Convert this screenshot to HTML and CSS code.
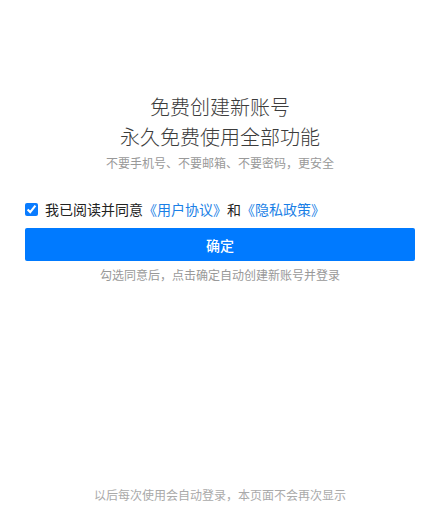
FILE: index.html
```html
<!DOCTYPE html>
<html lang="zh-CN">
<head>
<meta charset="utf-8">
<title>创建新账号</title>
<link rel="stylesheet" href="styles.css">
</head>
<body>
<div class="page">
  <div class="title">
    <div>免费创建新账号</div>
    <div>永久免费使用全部功能</div>
  </div>
  <div class="subtitle">不要手机号、不要邮箱、不要密码，更安全</div>
  <label class="agree">
    <input type="checkbox" class="check" checked>
    <span>我已阅读并同意<a class="link">《用户协议》</a>和<a class="link">《隐私政策》</a></span>
  </label>
  <button class="confirm">确定</button>
  <div class="hint">勾选同意后，点击确定自动创建新账号并登录</div>
  <div class="footer">以后每次使用会自动登录，本页面不会再次显示</div>
</div>
</body>
</html>
```

FILE: styles.css
```css
html, body {
  margin: 0;
  padding: 0;
  background: #ffffff;
}
body {
  font-family: "Noto Sans CJK SC", "Noto Sans", sans-serif;
}
.page {
  display: flex;
  flex-direction: column;
  min-height: 520px;
  box-sizing: border-box;
  padding: 0 25px 16px;
}
.title {
  margin-top: 92px;
  font-size: 20px;
  font-weight: 300;
  line-height: 30px;
  text-align: center;
  color: #3c3c3c;
}
.subtitle {
  margin-top: 2px;
  font-size: 12px;
  line-height: 18px;
  text-align: center;
  color: #999999;
}
.agree {
  margin-top: 27px;
  display: flex;
  align-items: center;
  font-size: 14px;
  line-height: 20px;
  color: #222222;
}
.check {
  width: 13px;
  height: 13px;
  margin: 0 7px 0 0;
  accent-color: #0a7cff;
}
.link {
  color: #1a7fe6;
  text-decoration: none;
}
.confirm {
  margin-top: 9px;
  height: 33px;
  border: none;
  border-radius: 2px;
  background: #007aff;
  color: #ffffff;
  font-family: inherit;
  font-size: 14px;
  font-weight: 500;
}
.hint {
  margin-top: 5px;
  font-size: 12px;
  line-height: 18px;
  text-align: center;
  color: #999999;
}
.footer {
  margin-top: auto;
  font-size: 12px;
  line-height: 18px;
  text-align: center;
  color: #aaaaaa;
}
```
